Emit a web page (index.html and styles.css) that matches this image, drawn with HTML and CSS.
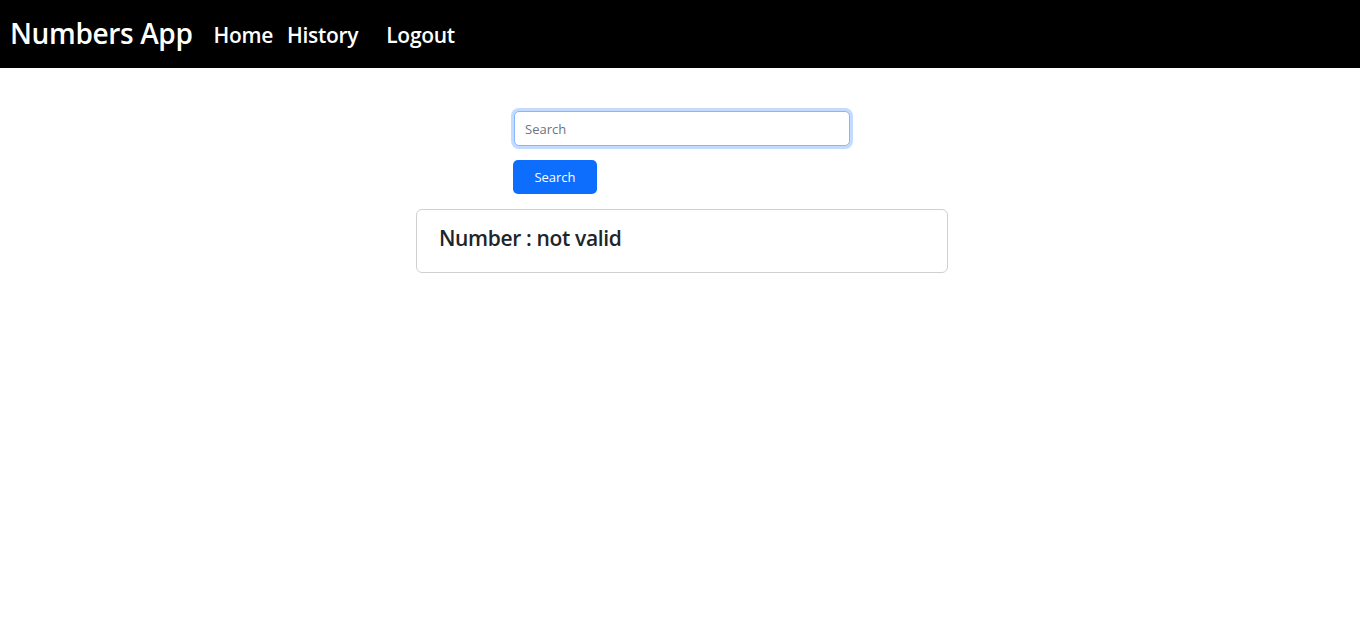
FILE: index.html
```html
<!DOCTYPE html>
<html>
<head>
<meta charset="utf-8">
<link rel="stylesheet" href="styles.css">
</head>
<body>
<nav class="navbar">
  <span class="brand">Numbers App</span>
  <a class="nav-link" href="#">Home</a>
  <a class="nav-link" href="#">History</a>
  <a class="nav-link logout" href="#">Logout</a>
</nav>
<main class="main">
  <form class="search-form">
    <input class="search-input" type="text" placeholder="Search" autofocus>
    <button class="search-btn" type="button">Search</button>
  </form>
  <div class="result-card">
    <h4 class="result-text">Number : not valid</h4>
  </div>
</main>
</body>
</html>
```
FILE: styles.css
```css
* { box-sizing: border-box; }
body {
  margin: 0;
  font-family: "Open Sans", "Noto Sans", sans-serif;
  color: #212529;
  background: #fff;
}
.navbar {
  height: 68px;
  background: #000;
  display: flex;
  align-items: center;
  padding: 0 10px;
}
.brand {
  color: #fff;
  font-size: 28px;
  font-weight: 600;
  margin-right: 21px;
  margin-bottom: 3px;
  letter-spacing: -0.35px;
}
.nav-link {
  color: #fff;
  text-decoration: none;
  font-size: 21px;
  font-weight: 600;
  margin-right: 14px;
  margin-top: 1px;
  letter-spacing: -0.3px;
}
.nav-link.logout { margin-left: 14px; }
.main {
  display: flex;
  flex-direction: column;
  align-items: center;
  padding-top: 43px;
  padding-left: 4px;
}
.search-form {
  width: 336px;
  display: flex;
  flex-direction: column;
  align-items: flex-start;
}
.search-input {
  width: 336px;
  height: 35px;
  border: 1px solid #86b7fe;
  border-radius: 5px;
  box-shadow: 0 0 0 3px rgba(13,110,253,.25);
  outline: none;
  padding: 0 10px;
  font-family: inherit;
  font-size: 13px;
  color: #212529;
  caret-color: #000;
}
.search-input::placeholder { color: #6c757d; }
.search-btn {
  margin-top: 14px;
  margin-left: -1px;
  width: 84px;
  height: 34px;
  background: #0d6efd;
  border: none;
  border-radius: 5px;
  color: #fff;
  font-family: inherit;
  font-size: 13px;
}
.result-card {
  margin-top: 15px;
  width: 532px;
  height: 64px;
  border: 1px solid #d0d0d0;
  border-radius: 6px;
  padding: 15px 22px;
}
.result-text {
  margin: 0;
  font-size: 21px;
  font-weight: 600;
  line-height: 26px;
  color: #212529;
  letter-spacing: -0.35px;
}
```
